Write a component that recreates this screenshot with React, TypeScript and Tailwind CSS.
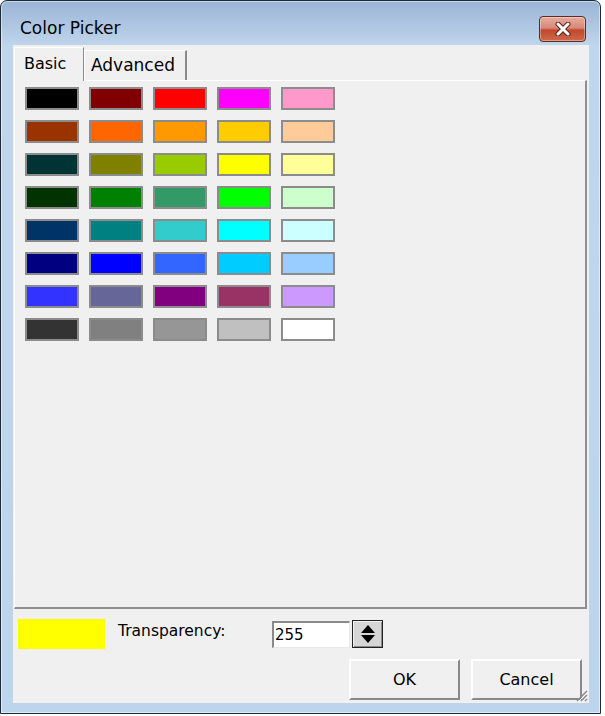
import React from 'react';

const rows: string[][] = [
  ['#000000', '#800000', '#ff0000', '#ff00ff', '#ff99cc'],
  ['#993300', '#ff6600', '#ff9900', '#ffcc00', '#ffcc99'],
  ['#003333', '#808000', '#99cc00', '#ffff00', '#ffff99'],
  ['#003300', '#008000', '#339966', '#00ff00', '#ccffcc'],
  ['#003366', '#008080', '#33cccc', '#00ffff', '#ccffff'],
  ['#000080', '#0000ff', '#3366ff', '#00ccff', '#99ccff'],
  ['#3333ff', '#666699', '#800080', '#993366', '#cc99ff'],
  ['#333333', '#808080', '#969696', '#c0c0c0', '#ffffff'],
];

const Swatch = ({ color }: { color: string }) => (
  <div className="w-[54px] h-[23px] border-2 border-[#8c8c8c]" style={{ backgroundColor: color }} />
);

const CloseButton = () => (
  <button className="w-[47px] h-[26px] rounded-[4px] border border-[#5e2a24] bg-[linear-gradient(to_bottom,#e8aa9d_0%,#d88a78_45%,#c2472d_55%,#cf6a4c_100%)] flex items-center justify-center shadow-[inset_0_0_0_1px_rgba(255,255,255,0.35)]">
    <svg width="18" height="14" viewBox="0 0 18 14">
      <path d="M4 2 L14 12 M14 2 L4 12" stroke="#5a241c" strokeWidth="5" strokeLinecap="round" />
      <path d="M4 2 L14 12 M14 2 L4 12" stroke="#ffffff" strokeWidth="3" strokeLinecap="round" />
    </svg>
  </button>
);

const Spinner = () => (
  <div className="w-[31px] h-[28px] border border-[#222] bg-[#d6d6d6] shadow-[inset_1px_1px_0_#f4f4f4,inset_-1px_-1px_0_#8a8a8a] flex items-center justify-center">
    <svg width="22" height="24" viewBox="0 0 22 24">
      <path d="M11 3 L18 11 L4 11 Z" fill="#000" />
      <path d="M4 13 L18 13 L11 21 Z" fill="#000" />
    </svg>
  </div>
);

const Button = ({ label }: { label: string }) => (
  <button className="w-[111px] h-[41px] bg-[#f0f0f0] border-t-2 border-l-2 border-t-white border-l-white border-r-2 border-b-2 border-r-[#8a8a8a] border-b-[#8a8a8a] text-[16px] text-black">
    {label}
  </button>
);

export default function App() {
  return (
    <div className="w-[605px] h-[716px] bg-white font-['DejaVu_Sans',sans-serif] text-black overflow-hidden">
      <div className="w-[601px] h-[714px] border border-[#1c2a3a] rounded-t-[7px] bg-[linear-gradient(to_bottom,#9ab5d6_0px,#b3cae4_30px,#c0d6ed_45px,#bcd4ec_100%)] flex flex-col shadow-[inset_0_0_0_1px_rgba(255,255,255,0.5)]">
        <div className="h-[44px] flex items-center pt-[11px] pl-[19px] pr-[14px]">
          <span className="text-[17px] flex-1">Color Picker</span>
          <CloseButton />
        </div>

        <div className="relative ml-[12px] w-[576px] h-[658px] bg-[#f0f0f0] flex flex-col">
          <div className="h-[35px] flex items-end pl-[1px]">
            <div className="relative z-10 w-[70px] h-[34px] -mb-px bg-[#f0f0f0] border-t border-l border-t-white border-l-white border-r border-r-[#8a8a8a] pl-[9px] pt-[4px] text-[16px]">
              Basic
            </div>
            <div className="w-[103px] h-[30px] bg-[#f0f0f0] border-t border-l border-t-white border-l-white border-r-2 border-r-[#8a8a8a] pl-[6px] pt-[2px] text-[17px]">
              Advanced
            </div>
          </div>

          <div className="ml-[1px] w-[573px] h-[529px] border-t border-l border-t-white border-l-white border-r-2 border-b-2 border-r-[#8f8f8f] border-b-[#8f8f8f] pt-[6px] pl-[10px]">
            <div className="flex flex-col gap-[10px]">
              {rows.map((row, i) => (
                <div key={i} className="flex gap-[10px]">
                  {row.map((c) => (
                    <Swatch key={c} color={c} />
                  ))}
                </div>
              ))}
            </div>
          </div>

          <div className="mt-[10px] flex items-center h-[30px]">
            <div className="ml-[5px] w-[87px] h-[30px] bg-[#ffff00]" />
            <span className="ml-[13px] w-[154px] text-[15.5px] -mt-[4px]">Transparency:</span>
            <div className="w-[78px] h-[27px] bg-white border-t-2 border-l-2 border-t-[#8a8a8a] border-l-[#8a8a8a] border-r border-b border-r-[#e8e8e8] border-b-[#e8e8e8] pl-[1px] text-[15px] leading-[24px]">
              255
            </div>
            <div className="ml-[2px]">
              <Spinner />
            </div>
          </div>

          <div className="mt-[10px] flex justify-end gap-[11px] pr-[7px]">
            <Button label="OK" />
            <Button label="Cancel" />
          </div>

          <svg className="absolute right-[1px] bottom-[1px]" width="13" height="13" viewBox="0 0 13 13">
            <path d="M12 2 L2 12 M12 6 L6 12 M12 10 L10 12" stroke="#8a8a8a" strokeWidth="1.5" />
            <path d="M13 3 L3 13 M13 7 L7 13" stroke="#ffffff" strokeWidth="1" />
          </svg>
        </div>
      </div>
    </div>
  );
}
